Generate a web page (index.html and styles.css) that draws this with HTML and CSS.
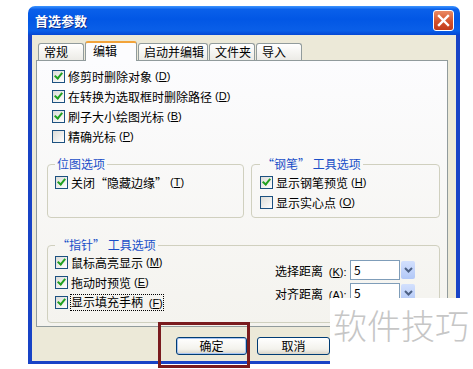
FILE: index.html
```html
<!DOCTYPE html>
<html lang="zh-CN">
<head>
    <meta charset="UTF-8">
    <title>首选参数</title>
    <link rel="stylesheet" href="styles.css">
</head>
<body>
    <div class="page">
        <div class="dialog">
            <div class="titlebar">
                <span class="title">首选参数</span>
                <span class="close">
                    <svg width="13" height="13" viewBox="0 0 13 13"><path d="M2 2 L11 11 M11 2 L2 11" stroke="#fff" stroke-width="2.4" stroke-linecap="square"/></svg>
                </span>
            </div>
            <div class="dialog-body">
                <div class="tabs">
                    <span class="tab">常规</span>
                    <span class="tab active">编辑</span>
                    <span class="tab">启动并编辑</span>
                    <span class="tab">文件夹</span>
                    <span class="tab">导入</span>
                </div>
                <div class="panel">
                    <div class="options">
                        <div class="check"><span class="box on"></span>修剪时删除对象 <span class="key">(<u>D</u>)</span></div>
                        <div class="check"><span class="box on"></span>在转换为选取框时删除路径 <span class="key">(<u>D</u>)</span></div>
                        <div class="check"><span class="box on"></span>刷子大小绘图光标 <span class="key">(<u>B</u>)</span></div>
                        <div class="check"><span class="box"></span>精确光标 <span class="key">(<u>P</u>)</span></div>
                    </div>

                    <div class="group-row">
                        <fieldset class="group">
                            <legend>位图选项</legend>
                            <div class="check"><span class="box on"></span>关闭“隐藏边缘” <span class="key">(<u>T</u>)</span></div>
                        </fieldset>
                        <fieldset class="group pen">
                            <legend>“钢笔” 工具选项</legend>
                            <div class="check"><span class="box on"></span>显示钢笔预览 <span class="key">(<u>H</u>)</span></div>
                            <div class="check"><span class="box"></span>显示实心点 <span class="key">(<u>O</u>)</span></div>
                        </fieldset>
                    </div>

                    <fieldset class="group pointer">
                        <legend>“指针” 工具选项</legend>
                        <div class="pointer-body">
                            <div class="pointer-checks">
                                <div class="check"><span class="box on"></span>鼠标高亮显示 <span class="key">(<u>M</u>)</span></div>
                                <div class="check"><span class="box on"></span>拖动时预览 <span class="key">(<u>E</u>)</span></div>
                                <div class="check"><span class="box on"></span><span class="focus">显示填充手柄 <span class="key">(<u>F</u>)</span></span></div>
                            </div>
                            <div class="fields">
                                <div class="field">
                                    <span class="field-label">选择距离 <span class="key">(<u>K</u>):</span></span>
                                    <span class="combo-value">5</span>
                                    <span class="combo-btn"><svg width="9" height="6" viewBox="0 0 9 6"><path d="M1 1 L4.5 4.5 L8 1" fill="none" stroke="#4d6185" stroke-width="2"/></svg></span>
                                </div>
                                <div class="field">
                                    <span class="field-label">对齐距离 <span class="key">(<u>A</u>):</span></span>
                                    <span class="combo-value">5</span>
                                    <span class="combo-btn"><svg width="9" height="6" viewBox="0 0 9 6"><path d="M1 1 L4.5 4.5 L8 1" fill="none" stroke="#4d6185" stroke-width="2"/></svg></span>
                                </div>
                            </div>
                        </div>
                    </fieldset>
                </div>
                <div class="buttons">
                    <span class="btn default">确定</span>
                    <span class="btn">取消</span>
                </div>
            </div>
        </div>

        <div class="highlight"></div>
        <div class="watermark">软件技巧</div>
    </div>
</body>
</html>
```

FILE: styles.css
```css
body {
    margin: 0;
    background-color: #fff;
    font-family: "Noto Sans CJK SC", "Liberation Sans", sans-serif;
    font-size: 12px;
    color: #000;
}
.page {
    position: relative;
    width: 473px;
    height: 369px;
    overflow: hidden;
    padding: 6px 0 0 28px;
    box-sizing: border-box;
}
.dialog {
    width: 432px;
}
.titlebar {
    height: 29px;
    display: flex;
    align-items: center;
    justify-content: space-between;
    padding: 0 6px 0 7px;
    border-radius: 7px 7px 0 0;
    background: linear-gradient(#3d95ff 0%, #0a60ea 12%, #0257e5 45%, #0a5fe8 85%, #0548d4 100%);
}
.title {
    color: #fff;
    font-weight: bold;
    font-size: 13px;
    text-shadow: 1px 1px 0 #0a2a8a;
}
.close {
    width: 21px;
    height: 21px;
    box-sizing: border-box;
    border: 1px solid #fff;
    border-radius: 3px;
    background: linear-gradient(#ea8a63, #d4522c 55%, #c23b1b);
    display: flex;
    align-items: center;
    justify-content: center;
}
.dialog-body {
    background-color: #ece9d8;
    border: solid #1843c6;
    border-width: 0 4px 3px 4px;
    padding: 6px 8px 6px 4px;
}
.tabs {
    display: flex;
    align-items: flex-end;
    height: 19px;
    padding-left: 2px;
    position: relative;
    z-index: 1;
}
.tab {
    height: 17px;
    min-width: 46px;
    box-sizing: border-box;
    padding: 0 3px 0 5px;
    margin-right: 1px;
    border: 1px solid #919b9c;
    border-bottom: none;
    border-radius: 3px 3px 0 0;
    background: linear-gradient(#fff, #ecebe6);
    line-height: 16px;
    white-space: nowrap;
}
.tab.active {
    height: 20px;
    min-width: 52px;
    padding-left: 7px;
    margin-bottom: -1px;
    border-top: 2px solid #f2a33a;
    background: #fcfcfe;
    line-height: 15px;
}
.panel {
    height: 267px;
    box-sizing: border-box;
    border: 1px solid #919b9c;
    background: linear-gradient(#fcfcfe, #f4f3ee);
    padding: 5px 7px 0 10px;
}
.options {
    padding-left: 5px;
}
.check {
    display: flex;
    align-items: center;
    height: 20px;
    white-space: nowrap;
}
.key {
    margin-left: 3px;
    font-family: "Liberation Sans", sans-serif;
    font-size: 11px;
}
.box {
    width: 13px;
    height: 13px;
    box-sizing: border-box;
    border: 1px solid #1c5180;
    background: linear-gradient(135deg, #dcdcd7, #fff);
    margin-right: 3px;
    position: relative;
    flex-shrink: 0;
}
.box.on::after {
    content: "";
    position: absolute;
    left: 3px;
    top: 0px;
    width: 3px;
    height: 6px;
    border: solid #21a121;
    border-width: 0 2px 2px 0;
    transform: rotate(40deg);
}
.group-row {
    display: flex;
    gap: 7px;
    margin-top: 11px;
}
.group {
    margin: 0;
    padding: 1px 0 5px 7px;
    border: 1px solid #d0d0bf;
    border-radius: 4px;
    min-width: 0;
    width: 197px;
    box-sizing: border-box;
}
.group.pen {
    width: 189px;
    padding-left: 8px;
}
.group legend {
    color: #1a4fc8;
    line-height: 14px;
    padding: 0 2px;
}
.group.pointer {
    width: 393px;
    margin-top: 20px;
    padding: 0 0 10px 7px;
}
.pointer-body {
    display: flex;
}
.pointer-checks {
    width: 220px;
}
.focus {
    outline: 1px dotted #000;
    outline-offset: 0;
    line-height: 14px;
}
.fields {
    padding-top: 8px;
    display: flex;
    flex-direction: column;
    gap: 3px;
}
.field {
    display: flex;
    align-items: center;
    height: 20px;
}
.field-label {
    width: 75px;
    white-space: nowrap;
}
.combo-value {
    width: 50px;
    height: 20px;
    box-sizing: border-box;
    border: 1px solid #7f9db9;
    background-color: #fff;
    padding-left: 3px;
    line-height: 18px;
}
.combo-btn {
    width: 14px;
    height: 18px;
    margin-left: 1px;
    box-sizing: border-box;
    border-radius: 2px;
    background: linear-gradient(#d3e0fd, #b2c8f7);
    display: flex;
    align-items: center;
    justify-content: center;
}
.buttons {
    display: flex;
    gap: 10px;
    margin-top: 10px;
    padding-left: 140px;
}
.btn {
    width: 71px;
    height: 18px;
    box-sizing: border-box;
    border: 1px solid #003c74;
    border-radius: 3px;
    background: linear-gradient(#fff, #f3f2ec 70%, #d8d4c8);
    text-align: center;
    line-height: 16px;
}
.btn + .btn {
    width: 73px;
}
.btn.default {
    box-shadow: inset 0 0 0 1px #a8c4f2;
}
.highlight {
    position: absolute;
    left: 158px;
    top: 322px;
    width: 92px;
    height: 46px;
    box-sizing: border-box;
    border: 3px solid #7a1b1e;
}
.watermark {
    position: absolute;
    left: 330px;
    top: 298px;
    width: 143px;
    height: 71px;
    box-sizing: border-box;
    background-color: #fff;
    padding: 9px 0 0 3px;
    color: #c6c6c6;
    font-size: 34px;
    line-height: 36px;
    font-weight: 300;
    white-space: nowrap;
}
```
